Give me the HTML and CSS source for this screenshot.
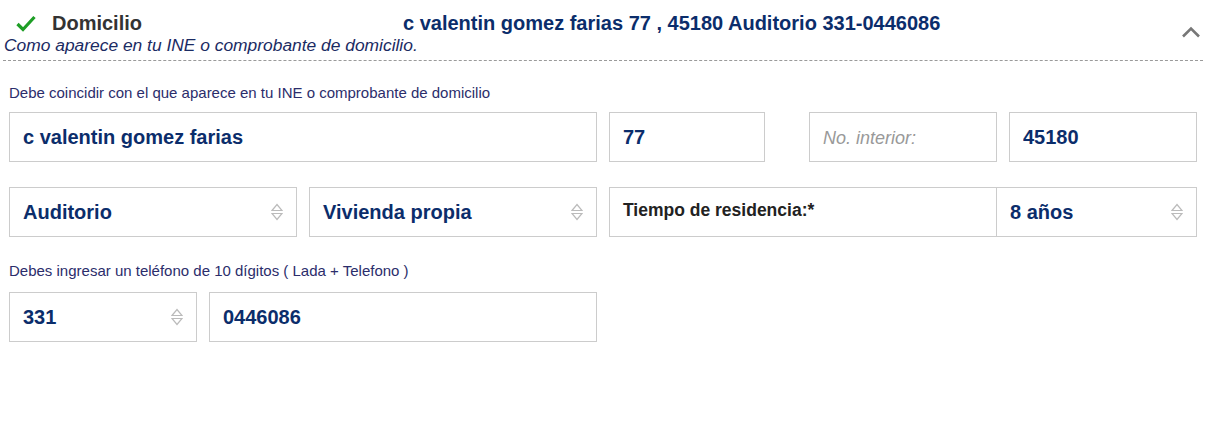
FILE: index.html
```html
<!DOCTYPE html>
<html lang="es">
<head>
<meta charset="utf-8">
<title>Domicilio</title>
<link rel="stylesheet" href="styles.css">
</head>
<body>
<section class="panel">
  <header class="head">
    <div class="head-main">
      <div class="head-row">
        <div class="title-cell">
          <svg class="check" viewBox="0 0 20 17" aria-hidden="true"><path d="M1.5 9 L7 14.5 L18.5 2" fill="none" stroke="#1e9e26" stroke-width="3.2"/></svg>
          <span class="title">Domicilio</span>
        </div>
        <span class="summary">c valentin gomez farias 77 , 45180 Auditorio 331-0446086</span>
      </div>
      <div class="head-sub">Como aparece en tu INE o comprobante de domicilio.</div>
    </div>
    <svg class="chev" viewBox="0 0 20 12" aria-hidden="true"><path d="M2 10.5 L10 2.5 L18 10.5" fill="none" stroke="#777" stroke-width="2.6"/></svg>
  </header>

  <div class="body">
    <p class="hint">Debe coincidir con el que aparece en tu INE o comprobante de domicilio</p>
    <div class="row row-street">
      <div class="cell"><input class="field" type="text" value="c valentin gomez farias"></div>
      <div class="cell"><input class="field narrow" type="text" value="77"></div>
      <div class="cell"><input class="field" type="text" placeholder="No. interior:"></div>
      <div class="cell"><input class="field" type="text" value="45180"></div>
    </div>
    <div class="row row-place">
      <div class="cell">
        <div class="field select"><span>Auditorio</span>
          <svg class="arrows" viewBox="0 0 12 18" aria-hidden="true"><path d="M1 7.5 L6 1.5 L11 7.5 Z M1 10.5 L11 10.5 L6 16.5 Z" fill="none" stroke="#bbb" stroke-width="1.2"/></svg>
        </div>
      </div>
      <div class="cell">
        <div class="field select"><span>Vivienda propia</span>
          <svg class="arrows" viewBox="0 0 12 18" aria-hidden="true"><path d="M1 7.5 L6 1.5 L11 7.5 Z M1 10.5 L11 10.5 L6 16.5 Z" fill="none" stroke="#bbb" stroke-width="1.2"/></svg>
        </div>
      </div>
      <div class="cell">
        <div class="field combo">
          <span class="combo-label">Tiempo de residencia:*</span>
          <div class="combo-select"><span>8 años</span>
            <svg class="arrows" viewBox="0 0 12 18" aria-hidden="true"><path d="M1 7.5 L6 1.5 L11 7.5 Z M1 10.5 L11 10.5 L6 16.5 Z" fill="none" stroke="#bbb" stroke-width="1.2"/></svg>
          </div>
        </div>
      </div>
    </div>
    <p class="hint hint-2">Debes ingresar un teléfono de 10 dígitos ( Lada + Telefono )</p>
    <div class="row row-phone">
      <div class="cell">
        <div class="field select"><span>331</span>
          <svg class="arrows" viewBox="0 0 12 18" aria-hidden="true"><path d="M1 7.5 L6 1.5 L11 7.5 Z M1 10.5 L11 10.5 L6 16.5 Z" fill="none" stroke="#bbb" stroke-width="1.2"/></svg>
        </div>
      </div>
      <div class="cell"><input class="field" type="text" value="0446086"></div>
    </div>
  </div>
</section>
</body>
</html>
```

FILE: styles.css
```css
* {
  box-sizing: border-box;
}

body {
  margin: 0;
  background: #fff;
  font-family: "Liberation Sans", Arial, sans-serif;
}

.panel {
  margin-left: 3px;
  width: 1200px;
}

.head {
  display: flex;
  align-items: flex-start;
  padding-top: 11px;
  padding-bottom: 5px;
  border-bottom: 1px dashed #9a9a9a;
}

.head-main {
  flex: 1;
}

.head-row {
  display: flex;
  align-items: center;
  height: 24px;
}

.title-cell {
  width: 400px;
  display: flex;
  align-items: center;
  gap: 16px;
  padding-left: 13px;
}

.check {
  width: 20px;
  height: 17px;
  flex: none;
}

.title {
  font-size: 20px;
  font-weight: bold;
  line-height: 24px;
  color: #333;
}

.summary {
  font-size: 20px;
  font-weight: bold;
  line-height: 24px;
  color: #0b2d6b;
}

.head-sub {
  font-style: italic;
  font-size: 17.4px;
  line-height: 20px;
  color: #1b2b63;
  padding-left: 1px;
}

.chev {
  width: 20px;
  height: 12px;
  margin-top: 15px;
  margin-right: 2px;
  flex: none;
}

.body {
  padding-top: 23px;
}

.hint {
  margin: 0 0 11px;
  padding-left: 6px;
  font-size: 15px;
  line-height: 17px;
  color: #2b2d6b;
}

.hint-2 {
  margin-top: 25px;
  margin-bottom: 13px;
}

.row {
  display: grid;
}

.row-street {
  grid-template-columns: 600px 200px 200px 200px;
}

.row-place {
  grid-template-columns: 300px 300px 600px;
  margin-top: 25px;
}

.row-phone {
  grid-template-columns: 200px 400px;
}

.cell {
  padding: 0 6px;
}

.field {
  display: flex;
  align-items: center;
  width: 100%;
  height: 50px;
  margin: 0;
  padding: 0 13px;
  border: 1px solid #ccc;
  border-radius: 0;
  background: #fff;
  font-family: "Liberation Sans", Arial, sans-serif;
  font-size: 20px;
  font-weight: bold;
  color: #0b2d6b;
  outline: none;
}

.field::placeholder {
  font-weight: normal;
  font-style: italic;
  font-size: 18px;
  color: #999;
}

.narrow {
  width: 156px;
}

.select {
  justify-content: space-between;
}

.arrows {
  width: 12px;
  height: 18px;
  flex: none;
}

.combo {
  padding: 0;
}

.combo-label {
  display: flex;
  align-items: center;
  width: 387px;
  height: 100%;
  padding: 0 13px 3px;
  border-right: 1px solid #ccc;
  font-size: 17.5px;
  color: #222;
}

.combo-select {
  flex: 1;
  display: flex;
  align-items: center;
  justify-content: space-between;
  padding: 0 13px;
}
```
